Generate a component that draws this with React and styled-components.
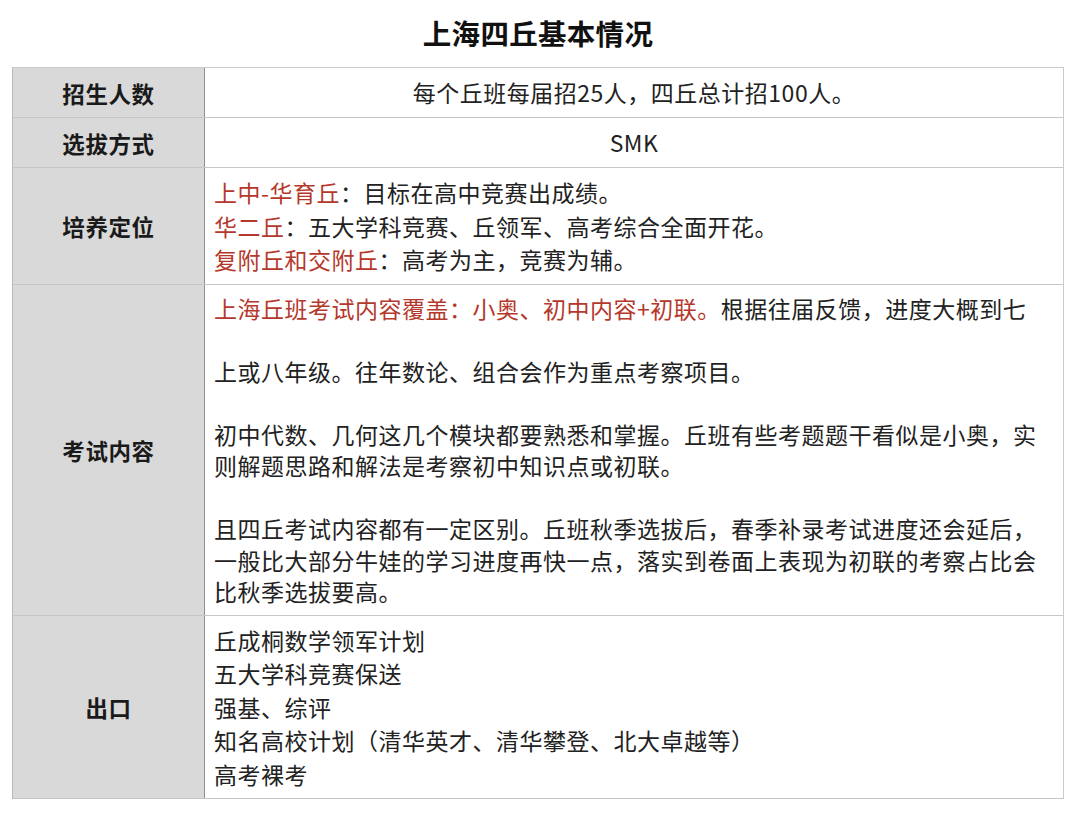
import React from 'react';
import styled, { createGlobalStyle } from 'styled-components';

const GlobalStyle = createGlobalStyle`
    html, body {
        margin: 0;
        padding: 0;
        background: #fff;
    }
    body {
        font-family: "Noto Sans CJK SC", "Noto Sans", sans-serif;
        color: #1f1f1f;
    }
`

const Page = styled.div`
    width: 1080px;
    padding: 0 16px 14px 12px;
    box-sizing: border-box;
`

const Title = styled.h1`
    margin: 0;
    height: 67px;
    display: flex;
    align-items: center;
    justify-content: center;
    font-size: 28.5px;
    font-weight: 700;
    color: #111;
    letter-spacing: 0.3px;
    padding-bottom: 2px;
    box-sizing: border-box;
`

const Table = styled.div`
    border-top: 1px solid #cbcbcb;
    border-left: 1px solid #b8b8b8;
    border-right: 1px solid #cbcbcb;
`

const Row = styled.div`
    display: grid;
    grid-template-columns: 192px 1fr;
    border-bottom: 1px solid #c6c6c6;
`

const Label = styled.div`
    background: #d9d9d9;
    border-right: 1px solid #8f8f8f;
    display: flex;
    align-items: center;
    justify-content: center;
    font-size: 22.5px;
    font-weight: 700;
    color: #1a1a1a;
    letter-spacing: 0.6px;
`

const Cell = styled.div`
    padding: ${(props) => (props.center ? '0' : '8px 10px 7px 9px')};
    height: ${(props) => (props.center ? '49px' : 'auto')};
    display: ${(props) => (props.center ? 'flex' : 'block')};
    align-items: center;
    justify-content: center;
    font-size: 23px;
    line-height: ${(props) => props.lh || 33.5}px;
    letter-spacing: 0.5px;
    color: #222;
`

const Line = styled.div`
    white-space: nowrap;
    min-height: ${(props) => props.lh || 33.5}px;
`

const Red = styled.span`
    color: #b5382c;
`

const App = () => {
    return (
        <Page>
            <GlobalStyle />
            <Title>上海四丘基本情况</Title>
            <Table>
                <Row>
                    <Label>招生人数</Label>
                    <Cell center>每个丘班每届招25人，四丘总计招100人。</Cell>
                </Row>
                <Row>
                    <Label>选拔方式</Label>
                    <Cell center>SMK</Cell>
                </Row>
                <Row>
                    <Label>培养定位</Label>
                    <Cell>
                        <Line><Red>上中-华育丘</Red>：目标在高中竞赛出成绩。</Line>
                        <Line><Red>华二丘</Red>：五大学科竞赛、丘领军、高考综合全面开花。</Line>
                        <Line><Red>复附丘和交附丘</Red>：高考为主，竞赛为辅。</Line>
                    </Cell>
                </Row>
                <Row>
                    <Label>考试内容</Label>
                    <Cell lh={31.5}>
                        <Line lh={31.5}><Red>上海丘班考试内容覆盖：小奥、初中内容+初联。</Red>根据往届反馈，进度大概到七</Line>
                        <Line lh={31.5} />
                        <Line lh={31.5}>上或八年级。往年数论、组合会作为重点考察项目。</Line>
                        <Line lh={31.5} />
                        <Line lh={31.5}>初中代数、几何这几个模块都要熟悉和掌握。丘班有些考题题干看似是小奥，实</Line>
                        <Line lh={31.5}>则解题思路和解法是考察初中知识点或初联。</Line>
                        <Line lh={31.5} />
                        <Line lh={31.5}>且四丘考试内容都有一定区别。丘班秋季选拔后，春季补录考试进度还会延后，</Line>
                        <Line lh={31.5}>一般比大部分牛娃的学习进度再快一点，落实到卷面上表现为初联的考察占比会</Line>
                        <Line lh={31.5}>比秋季选拔要高。</Line>
                    </Cell>
                </Row>
                <Row>
                    <Label>出口</Label>
                    <Cell>
                        <Line>丘成桐数学领军计划</Line>
                        <Line>五大学科竞赛保送</Line>
                        <Line>强基、综评</Line>
                        <Line>知名高校计划（清华英才、清华攀登、北大卓越等）</Line>
                        <Line>高考裸考</Line>
                    </Cell>
                </Row>
            </Table>
        </Page>
    );
}

export default App;
